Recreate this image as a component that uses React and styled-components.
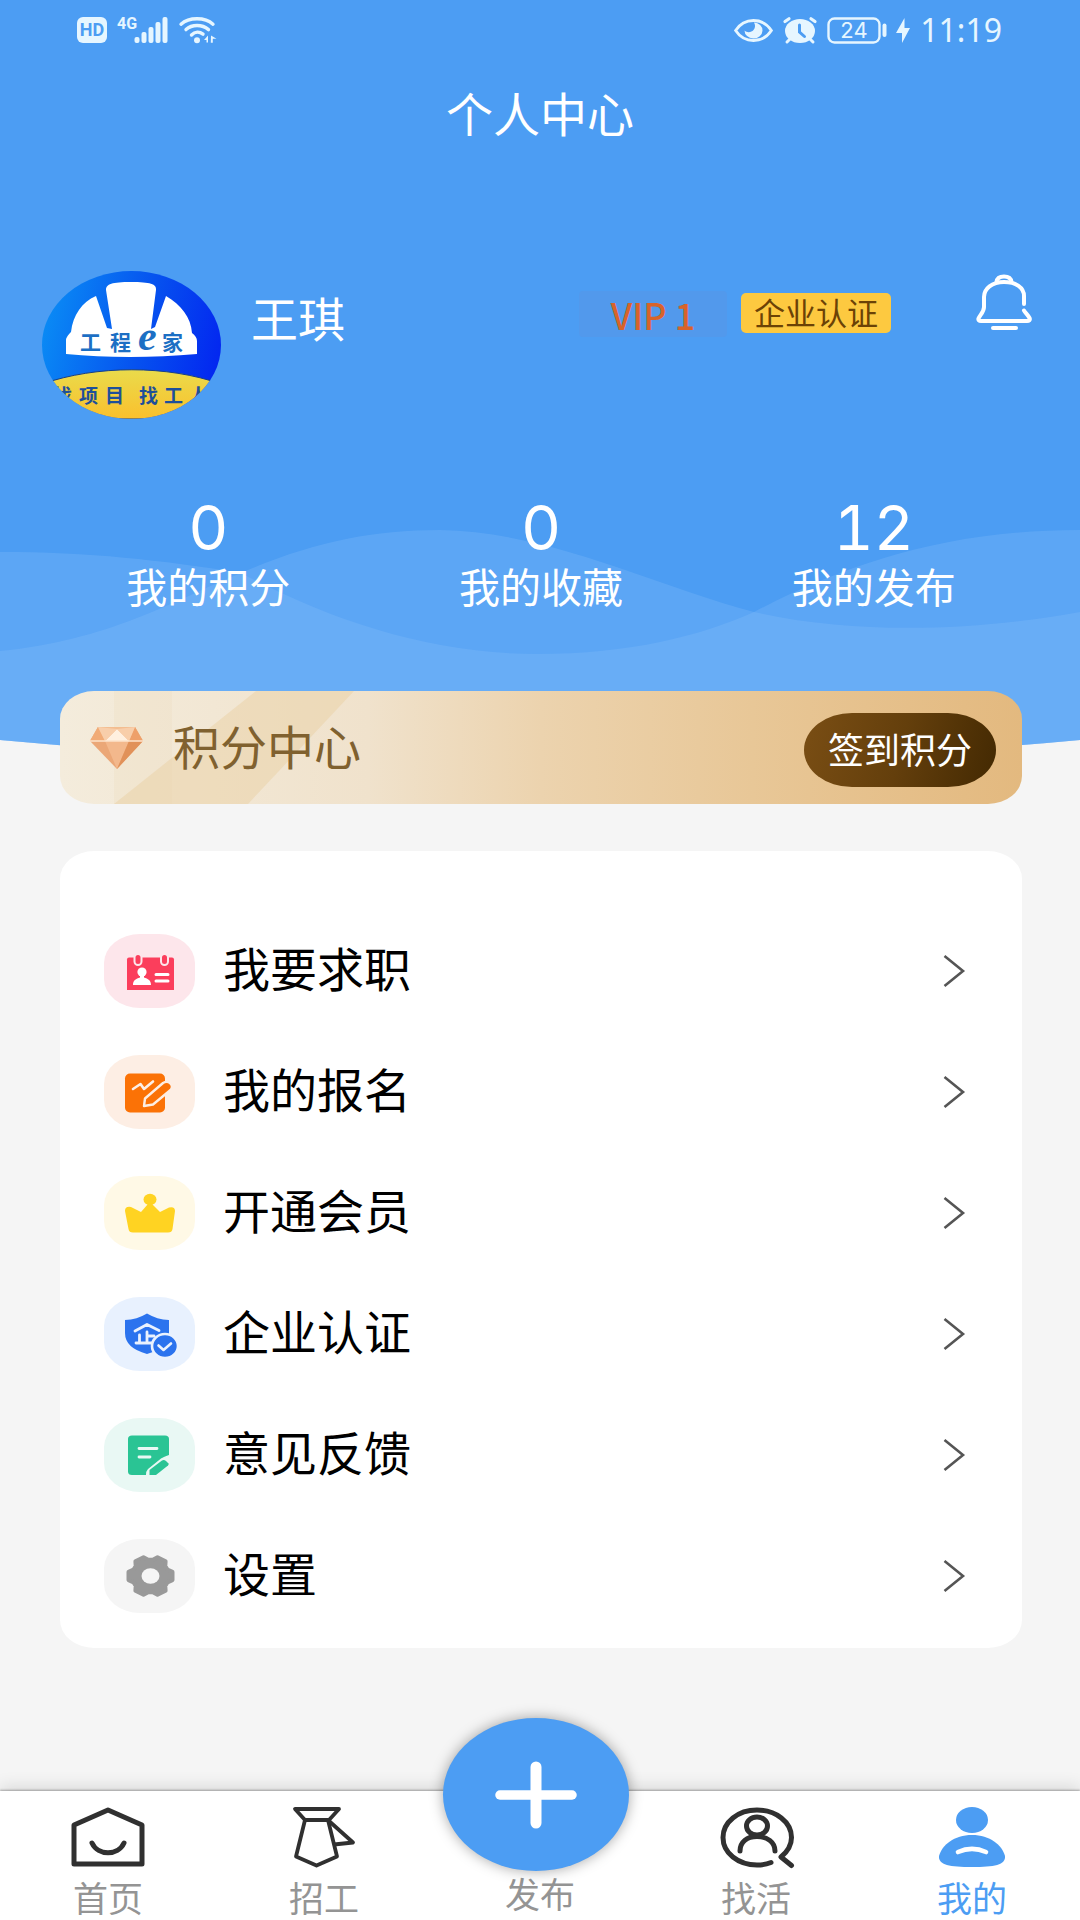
import React from 'react';
import styled, { createGlobalStyle } from 'styled-components';

const GlobalStyle = createGlobalStyle`
	*, *::before, *::after {
		box-sizing: border-box;
	}
	body {
		margin: 0;
		background-color: #f5f5f5;
		font-family: "Noto Sans CJK SC", "Noto Sans", sans-serif;
	}
	a {
		color: inherit;
		text-decoration: none;
	}
	button {
		padding: 0;
		border: none;
		background: none;
		color: inherit;
		font-family: inherit;
		cursor: pointer;
	}
	svg {
		display: block;
		flex-shrink: 0;
		overflow: visible;
	}
`
const Page = styled.div`
	display: flex;
	flex-direction: column;
	min-height: 100vh;
`
const Header = styled.header`
	position: relative;
	color: #fff;
`
const Backdrop = styled.svg`
	position: absolute;
	top: 0;
	left: 0;
	width: 100%;
	height: 760px;
	z-index: -1;
`
const StatusBar = styled.div`
	display: flex;
	align-items: center;
	justify-content: space-between;
	height: 60px;
	padding: 0 78px 0 77px;
	color: #e6f6ff;
`
const StatusGroup = styled.div`
	display: flex;
	align-items: center;
	gap: 10px;
`
const HdBadge = styled.span`
	width: 30px;
	height: 26px;
	border-radius: 6px;
	background-color: #e6f6ff;
	color: #4c9df3;
	font: bold 18px/26px Roboto, sans-serif;
	text-align: center;
`
const Clock = styled.time`
	font: 32px/40px "Noto Sans", sans-serif;
`
const PageTitle = styled.h1`
	margin: 0;
	padding-top: 20px;
	font-size: 47px;
	font-weight: 400;
	line-height: 64px;
	text-align: center;
`
const Profile = styled.section`
	display: flex;
	align-items: flex-start;
	padding: 127px 48px 0 42px;
`
const UserName = styled.h2`
	flex: 1;
	margin: 0;
	padding: 14px 0 0 30px;
	font-size: 47px;
	font-weight: 400;
	line-height: 64px;
`
const Tags = styled.div`
	display: flex;
	gap: 14px;
	padding-top: 20px;
	margin-right: 85px;
`
const VipTag = styled.span`
	width: 148px;
	height: 46px;
	border-radius: 4px;
	background-color: rgba(96, 146, 222, 0.3);
	color: #d8632a;
	font-size: 36px;
	font-weight: 500;
	line-height: 46px;
	text-align: center;
`
const CompanyTag = styled.span`
	width: 150px;
	height: 40px;
	margin-top: 2px;
	border-radius: 5px;
	background-color: #fdc940;
	color: #6b4206;
	font-size: 31px;
	line-height: 37px;
	text-align: center;
`
const BellButton = styled.button`
	margin-top: 3px;
`
const Stats = styled.section`
	display: grid;
	grid-template-columns: repeat(3, 1fr);
	padding: 78px 40px 0 42px;
`
const Stat = styled.a`
	display: flex;
	flex-direction: column;
	align-items: center;
	strong {
		font-family: Inter, sans-serif;
		font-size: 62px;
		font-weight: 400;
		font-variant-numeric: tabular-nums;
		line-height: 62px;
	}
	span {
		font-size: 41px;
		line-height: 52px;
	}
`
const Main = styled.main`
	flex: 1;
	padding: 80px 58px 0 60px;
`
const PointsCard = styled.section`
	position: relative;
	display: flex;
	align-items: center;
	height: 113px;
	padding: 0 26px 0 30px;
	border-radius: 34px / 28px;
	background: linear-gradient(90deg, #f4ecdc 0%, #f0e2cc 32%, #ecd3ae 50%, #e8c797 72%, #e3b97f 100%);
	overflow: hidden;
	h2 {
		flex: 1;
		margin: 0 0 0 30px;
		padding-bottom: 6px;
		color: #80612f;
		font-size: 47px;
		font-weight: 400;
		line-height: 64px;
	}
	> * {
		position: relative;
	}
`
const CardShine = styled.svg`
	&& {
		position: absolute;
	}
	left: 0;
	top: 0;
`
const SignButton = styled.button`
	width: 192px;
	height: 74px;
	margin-top: 4px;
	padding-bottom: 4px;
	border-radius: 48px / 37px;
	background: linear-gradient(105deg, #7a4e14 0%, #643f0c 50%, #432902 100%);
	color: #fff;
	font-size: 36px;
	line-height: 70px;
`
const Menu = styled.nav`
	margin-top: 47px;
	padding: 59px 57px 12px 44px;
	border-radius: 34px / 28px;
	background-color: #fff;
`
const MenuItem = styled.a`
	display: flex;
	align-items: center;
	height: 121px;
	color: #000;
	font-size: 47px;
	line-height: 64px;
	span {
		flex: 1;
		margin-left: 28px;
		padding-bottom: 7px;
	}
`
const IconTile = styled.div`
	width: 91px;
	height: 74px;
	border-radius: 36px / 29px;
	background-color: ${({ $tint }) => $tint};
`
const TabBar = styled.nav`
	position: relative;
	display: grid;
	grid-template-columns: repeat(5, 1fr);
	height: 129px;
	background-color: #fff;
	box-shadow: 0 -1px 2px rgba(0, 0, 0, 0.3), 0 -4px 16px rgba(0, 0, 0, 0.12);
`
const Tab = styled.a`
	display: flex;
	flex-direction: column;
	align-items: center;
	justify-content: flex-end;
	padding-bottom: 2px;
	color: ${({ $active }) => ($active ? '#4c9df3' : '#949494')};
	font-size: 35px;
	line-height: 42px;
	gap: 9px;
`
const PublishTab = styled(Tab)`
	padding-bottom: 6px;
`
const PublishCircle = styled.span`
	position: absolute;
	left: 41%;
	bottom: 49px;
	display: flex;
	align-items: center;
	justify-content: center;
	width: 186px;
	height: 153px;
	border-radius: 50%;
	background-color: #4c9df3;
	box-shadow: 0 0 14px rgba(0, 0, 0, 0.35);
`

const SignalIcon = () => (
	<svg width="52" height="27" viewBox="0 0 52 27" fill="currentColor">
		<text x="0" y="12" fontSize="16" fontWeight="bold" fontFamily="Roboto, sans-serif">4G</text>
		<rect x="17.500" y="20" width="5" height="6" rx="2" />
		<rect x="24.500" y="15" width="5" height="11" rx="2" />
		<rect x="31.500" y="10" width="5" height="16" rx="2" />
		<rect x="38.500" y="5" width="5" height="21" rx="2" />
		<rect x="45.500" y="0" width="5" height="26" rx="2" />
	</svg>
)

const WifiIcon = () => (
	<svg width="39" height="27" viewBox="0 0 39 27" fill="none" stroke="currentColor" strokeWidth="3.4" strokeLinecap="round">
		<path d="M2 7.2C10 0 26 0 34 7.2" />
		<path d="M7 12.6C13 7.2 23 7.2 29.500 12.600" />
		<path d="M12.500 18C16 14.500 20.500 14.500 24 17.200" />
		<circle cx="18" cy="23.300" r="3" fill="currentColor" stroke="none" />
		<path d="M25 23l4-4.500v7h-1.500V23zM32 18.500l5.500 3.200h-3.700v4h-2z" fill="currentColor" stroke="none" />
	</svg>
)

const EyeIcon = () => (
	<svg width="39" height="23" viewBox="0 0 39 23" fill="none" stroke="currentColor" strokeWidth="2.8">
		<path d="M1.600 11.500C6 4.800 12 1.500 19.500 1.500S33 4.800 37.400 11.500C33 18.200 27 21.500 19.500 21.500S6 18.200 1.600 11.500z" />
		<path d="M20 3.500a9 8 0 1 1-9.500 8c2.500 2.500 7 2 9-0.500 2-2.300 2-5 0.500-7.500z" fill="currentColor" stroke="none" />
	</svg>
)

const AlarmIcon = () => (
	<svg width="34" height="27" viewBox="0 0 34 27" fill="none" stroke="currentColor" strokeLinecap="round">
		<ellipse cx="17" cy="14" rx="15" ry="12" fill="currentColor" stroke="none" />
		<path d="M2 4.500L6 1.700M32 4.500L28 1.700" strokeWidth="3.200" />
		<path d="M7 22L4 25M27 22l3 3" strokeWidth="3" />
		<path d="M16.500 8v7l5 4.500" stroke="#4c9df3" strokeWidth="3" />
	</svg>
)

const BatteryIcon = () => (
	<svg width="59" height="27" viewBox="0 0 59 27" fill="none" stroke="currentColor">
		<rect x="1.500" y="1.500" width="51" height="24" rx="6" strokeWidth="2.400" />
		<path d="M57.500 8.500v9.500" strokeWidth="4" strokeLinecap="round" />
		<text x="27" y="21" textAnchor="middle" fontSize="22" fontFamily="Inter, sans-serif" fill="currentColor" stroke="none">24</text>
	</svg>
)

const BoltIcon = () => (
	<svg width="14" height="25" viewBox="0 0 14 25" fill="currentColor">
		<path d="M8.500 0v10H14L6 25V15H0z" />
	</svg>
)

const BellIcon = () => (
	<svg width="56" height="56" viewBox="0 0 56 56" fill="none" stroke="#fff" strokeWidth="4" strokeLinecap="round" strokeLinejoin="round">
		<path d="M48 30V22C48 13.500 40 8 28 8S8 14.500 8 23V33C8 38 4 41 2.500 44.500C2 46 3 47 5 47H51C53 47 54.500 46 53.500 44C52 41 49.500 39 48 36.500" />
		<path d="M20.500 8C21 4 24 2.500 28 2.500s7 1.500 7.500 5.500" />
		<path d="M17 54H40" />
	</svg>
)

const Avatar = () => (
	<svg width="179" height="148" viewBox="0 0 179 148" role="img" aria-label="工程e家">
		<defs>
			<linearGradient id="avatarSky" x1="0" y1="0.300" x2="1" y2="0.500">
				<stop offset="0" stopColor="#0a8cf5" />
				<stop offset="0.550" stopColor="#0653ef" />
				<stop offset="1" stopColor="#0328f0" />
			</linearGradient>
			<linearGradient id="avatarGround" x1="0" y1="0" x2="0" y2="1">
				<stop offset="0" stopColor="#eadb4b" />
				<stop offset="1" stopColor="#fac02d" />
			</linearGradient>
			<clipPath id="avatarClip">
				<ellipse cx="89.500" cy="74" rx="89.500" ry="74" />
			</clipPath>
		</defs>
		<g clipPath="url(#avatarClip)">
			<rect width="179" height="148" fill="url(#avatarSky)" />
			<path d="M0 113C55 94 125 94 179 113V148H0z" fill="url(#avatarGround)" stroke="#173f87" strokeWidth="1" />
			<path d="M24 83V69C24 66 28 62 29 61C31 44 40 31 54 25L65 57L70 58L64 19C64 13 70 11 89 11S115 13 114 19L109 58L113 56L124 25C139 34 149 46 150 62C153 64 155 67 155 70V83C110 87 65 87 24 83z" fill="#fff" />
			<g fill="#1c6fc4" fontWeight="bold" fontSize="21">
				<text x="38" y="79">工</text>
				<text x="68" y="79">程</text>
				<text x="96" y="79" fontFamily="Liberation Serif, serif" fontStyle="italic" fontSize="42">e</text>
				<text x="120" y="79">家</text>
			</g>
			<g fill="#1e4f9a" fontWeight="bold" fontSize="19">
				<text x="11" y="132">找</text>
				<text x="37" y="132">项</text>
				<text x="63" y="132">目</text>
				<text x="97" y="132">找</text>
				<text x="122" y="132">工</text>
				<text x="147" y="132">人</text>
			</g>
		</g>
	</svg>
)

const DiamondIcon = () => (
	<svg width="53" height="42" viewBox="0 0 53 42">
		<path d="M8 0H45L53 14L27 42L0 14z" fill="#eba777" />
		<path d="M8 0H45L53 14H0z" fill="#f3bd90" />
		<path d="M27 2L39 14H15z" fill="#fff0e0" />
		<path d="M0 14L8 0L15 14z" fill="#f1ab76" />
		<path d="M53 14L45 0L39 14z" fill="#eea06a" />
		<path d="M8 0L27 2L15 14zM45 0L27 2L39 14z" fill="#f8ceaa" />
		<path d="M15 14H39L27 42z" fill="#f3b88c" />
		<path d="M39 14H53L27 42z" fill="#e19159" />
		<path d="M0 14H53" stroke="#fde3cb" strokeWidth="1.500" />
	</svg>
)

const ChevronIcon = () => (
	<svg width="22" height="34" viewBox="0 0 22 34" fill="none" stroke="#555" strokeWidth="2.600">
		<path d="M1.500 2L20 17L1.500 32" />
	</svg>
)

const MenuIcon = ({ children }) => (
	<svg width="91" height="74" viewBox="-1 0 91 74" strokeLinecap="round" strokeLinejoin="round">{children}</svg>
)

const JobIcon = () => (
	<MenuIcon>
		<path d="M24 23.500H67Q69 23.500 69 25.500V56H22V25.500Q22 23.500 24 23.500z" fill="#fb3e5c" />
		<rect x="29.500" y="20" width="7" height="11" rx="3.500" fill="#fb3e5c" stroke="#fde6eb" strokeWidth="2" />
		<rect x="56" y="20" width="7" height="11" rx="3.500" fill="#fb3e5c" stroke="#fde6eb" strokeWidth="2" />
		<ellipse cx="37" cy="38" rx="4.600" ry="4.500" fill="#fff" />
		<path d="M28 51C28 46 31 45 35 43.500V41H39V43.500C43 45 46 46 46 51z" fill="#fff" />
		<path d="M51 40.500H63M51 47H63" stroke="#fff" strokeWidth="3" />
	</MenuIcon>
)

const SignUpIcon = () => (
	<MenuIcon>
		<rect x="20" y="18.500" width="40" height="39" rx="5" fill="#fb7206" />
		<path d="M28 34L35.500 29L39 34L48 26.500" fill="none" stroke="#fdeee4" strokeWidth="2.600" />
		<path d="M39 51L40 43.500L58 28Q62 25.500 65.500 28.500Q68.500 32 65.500 35L48 49.500z" fill="#fb7206" stroke="#fdeee4" strokeWidth="2.400" />
	</MenuIcon>
)

const CrownIcon = () => (
	<MenuIcon>
		<path d="M20 35Q20 30 26 31L36 36L43 28H47L55 36L64 31.500Q70 30 70 35L67.500 53Q67 56.500 63 56.500H28Q24 56.500 23.500 53z" fill="#ffd322" />
		<ellipse cx="45" cy="23.500" rx="6.500" ry="5.800" fill="#ffd322" />
	</MenuIcon>
)

const CertIcon = () => (
	<MenuIcon>
		<path d="M20 23Q32 22.500 42 16.500Q52 22.500 64 23V36Q64 51 42 57Q20 51 20 36z" fill="#2b73ee" />
		<path d="M30 34L42 27.500L54 33.500M42 35V45M34.500 38V45M42 39H49M31 46H52" fill="none" stroke="#eaf2fe" strokeWidth="2.800" />
		<ellipse cx="60" cy="49" rx="13" ry="12" fill="#2b73ee" stroke="#eaf2fe" strokeWidth="2.600" />
		<path d="M53.500 48.500L58.500 53L66 46.500" fill="none" stroke="#eaf2fe" strokeWidth="2.600" />
	</MenuIcon>
)

const FeedbackIcon = () => (
	<MenuIcon>
		<path d="M27 17.500H60Q64 17.500 64 21V37Q60 38 56 40.500L43 51Q41 53 41 57H27Q23 57 23 53.500V21Q23 17.500 27 17.500z" fill="#2ac494" />
		<path d="M34 30.500H52M34 39H45" stroke="#e9f8f4" strokeWidth="2.800" />
		<path d="M44.500 52L57 42.500Q59 41.500 61 43L63.500 45.500Q64 46.500 63 47.500L51 57H44.500z" fill="#2ac494" />
	</MenuIcon>
)

// six teeth around a slightly flattened hub
const gearPoints = Array.from({ length: 6 }, (_, i) => i * 60)
	.flatMap((angle) => [[angle - 23, 18.5], [angle - 12, 22.5], [angle + 12, 22.5], [angle + 23, 18.5]])
	.map(([angle, r]) => {
		const rad = (angle * Math.PI) / 180;
		return `${(45.5 + r * Math.cos(rad)).toFixed(1)},${(37 + r * 0.88 * Math.sin(rad)).toFixed(1)}`;
	})
	.join(' ');

const GearIcon = () => (
	<MenuIcon>
		<polygon points={gearPoints} fill="#999" stroke="#999" strokeWidth="4" />
		<ellipse cx="45.500" cy="37" rx="9" ry="7.800" fill="#f5f5f5" />
	</MenuIcon>
)

const HomeIcon = () => (
	<svg width="74" height="60" viewBox="0 0 74 60" fill="none" stroke="#303030" strokeWidth="5" strokeLinejoin="round">
		<path d="M3 18L37 3L71 18V57H3z" />
		<path d="M21 36C27 49 47 49 53 36" strokeLinecap="round" />
	</svg>
)

const TieIcon = () => (
	<svg width="62" height="60" viewBox="0 0 62 60" fill="none" stroke="#303030" strokeWidth="3.800" strokeLinejoin="round">
		<path d="M2 2H46L36 13H12z" />
		<path d="M12 13L3 49.500L23.500 58.500L44 49.500L35 13z" />
		<path d="M36 14L60 35.500L41 37.500" />
	</svg>
)

const FindIcon = () => (
	<svg width="72" height="60" viewBox="0 0 72 60" fill="none" stroke="#303030" strokeWidth="5" strokeLinecap="round">
		<path d="M51 55.500C46 57.500 42 58 37 58C18 58 3 46 3 30.500S18 3 37 3S71.500 15 71.500 30.500C71.500 39 67 45 61 50L71.500 58.500" strokeLinejoin="round" />
		<ellipse cx="37" cy="19" rx="10.500" ry="9" />
		<path d="M20 44C20 35 27 29.500 37 29.500S55 35 55 44" />
	</svg>
)

const MeIcon = () => (
	<svg width="68" height="60" viewBox="0 0 68 60" fill="#4c9df3">
		<ellipse cx="34" cy="13" rx="16" ry="13" />
		<path d="M34 28C52 28 64 38 67 49C68 58 56 60 34 60S0 58 1 49C4 38 16 28 34 28z" />
		<path d="M20 45C29 41 39 41 48 45" fill="none" stroke="#fff" strokeWidth="4.600" strokeLinecap="round" />
	</svg>
)

const PlusIcon = () => (
	<svg width="82" height="68" viewBox="0 0 82 68" stroke="#fff" strokeLinecap="round">
		<path d="M5 34H77" strokeWidth="9.500" />
		<path d="M41 6V62" strokeWidth="11" />
	</svg>
)

const stats = [
	{ value: 0, label: '我的积分' },
	{ value: 0, label: '我的收藏' },
	{ value: 12, label: '我的发布' },
];

const menuItems = [
	{ label: '我要求职', tint: '#fde6eb', Icon: JobIcon },
	{ label: '我的报名', tint: '#fdeee4', Icon: SignUpIcon },
	{ label: '开通会员', tint: '#fff9e6', Icon: CrownIcon },
	{ label: '企业认证', tint: '#e8f1fe', Icon: CertIcon },
	{ label: '意见反馈', tint: '#e9f8f4', Icon: FeedbackIcon },
	{ label: '设置', tint: '#f5f5f5', Icon: GearIcon },
];

function App() {
	return (
		<>
			<GlobalStyle />
			<Page>
				<Header>
					<Backdrop viewBox="0 0 1080 760" preserveAspectRatio="none" aria-hidden="true">
						<defs>
							<clipPath id="headerShape">
								<path d="M0 0H1080V740Q540 790 0 740z" />
							</clipPath>
						</defs>
						<g clipPath="url(#headerShape)">
							<rect width="1080" height="760" fill="#4c9df3" />
							<g fill="#8cc2fd" fillOpacity="0.260">
								<path d="M0 552C90 552 160 560 241 573C330 620 430 654 537 654C630 654 700 636 754 612C850 562 950 530 1080 530V760H0z" />
								<path d="M0 651C110 640 170 602 241 573C310 543 370 530 440 530C550 532 650 584 754 612C860 636 980 630 1080 612V760H0z" />
							</g>
						</g>
					</Backdrop>
					<StatusBar>
						<StatusGroup>
							<HdBadge>HD</HdBadge>
							<SignalIcon />
							<WifiIcon />
						</StatusGroup>
						<StatusGroup>
							<EyeIcon />
							<AlarmIcon />
							<BatteryIcon />
							<BoltIcon />
							<Clock>11:19</Clock>
						</StatusGroup>
					</StatusBar>
					<PageTitle>个人中心</PageTitle>
					<Profile>
						<Avatar />
						<UserName>王琪</UserName>
						<Tags>
							<VipTag>VIP 1</VipTag>
							<CompanyTag>企业认证</CompanyTag>
						</Tags>
						<BellButton type="button" aria-label="消息">
							<BellIcon />
						</BellButton>
					</Profile>
					<Stats>
						{stats.map(({ value, label }) => (
							<Stat href="#" key={label}>
								<strong>{value}</strong>
								<span>{label}</span>
							</Stat>
						))}
					</Stats>
				</Header>
				<Main>
					<PointsCard>
						<CardShine width="320" height="113" viewBox="0 0 320 113" aria-hidden="true">
							<path d="M54 0H112V113H54z" fill="#e9d9b4" fillOpacity="0.200" />
							<path d="M196 0H294L188 113H54z" fill="#e8cfa0" fillOpacity="0.450" />
						</CardShine>
						<DiamondIcon />
						<h2>积分中心</h2>
						<SignButton type="button">签到积分</SignButton>
					</PointsCard>
					<Menu>
						{menuItems.map(({ label, tint, Icon }) => (
							<MenuItem href="#" key={label}>
								<IconTile $tint={tint}><Icon /></IconTile>
								<span>{label}</span>
								<ChevronIcon />
							</MenuItem>
						))}
					</Menu>
				</Main>
				<TabBar>
					<Tab href="#"><HomeIcon />首页</Tab>
					<Tab href="#"><TieIcon />招工</Tab>
					<PublishTab href="#">
						<PublishCircle><PlusIcon /></PublishCircle>
						发布
					</PublishTab>
					<Tab href="#"><FindIcon />找活</Tab>
					<Tab href="#" $active><MeIcon />我的</Tab>
				</TabBar>
			</Page>
		</>
	)
}

export default App;
